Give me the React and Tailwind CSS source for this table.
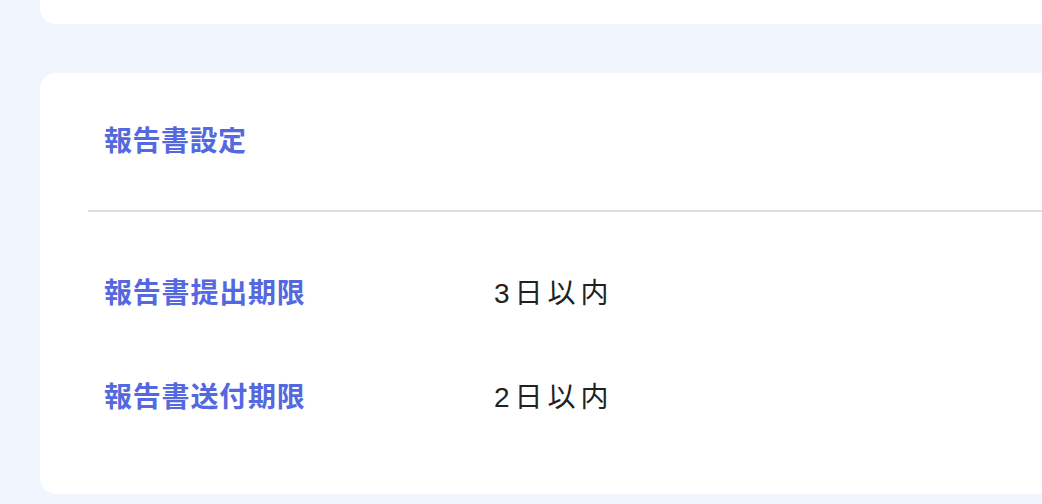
export default function App() {
  const rows = [
    { label: "報告書提出期限", value: "3日以内" },
    { label: "報告書送付期限", value: "2日以内" },
  ];
  const font = { fontFamily: '"Liberation Sans", "Noto Sans CJK JP", sans-serif' };
  return (
    <div
      className="w-[1042px] h-[504px] overflow-hidden bg-[#f1f6fe]"
      style={font}
    >
      <div className="ml-[40px] w-[1100px] h-[24px] bg-white rounded-b-[16px]" />
      <div className="ml-[40px] mt-[49px] w-[1100px] h-[421px] bg-white rounded-[16px] pl-[48px]">
        <div className="h-[137px] flex items-center pl-[16px]">
          <h2 className="text-[28px] font-bold tracking-[0.5px] text-[#5468e0] leading-none">
            報告書設定
          </h2>
        </div>
        <div className="h-[2px] bg-[#e0e0e0]" />
        <div className="pt-[30px]">
          {rows.map((r) => (
            <div key={r.label} className="h-[104px] flex items-center pl-[16px]">
              <div className="w-[390px] text-[28px] font-bold tracking-[0.8px] text-[#5468e0] leading-none">
                {r.label}
              </div>
              <div className="text-[28px] tracking-[5px] text-[#222222] leading-none">
                {r.value}
              </div>
            </div>
          ))}
        </div>
      </div>
    </div>
  );
}
